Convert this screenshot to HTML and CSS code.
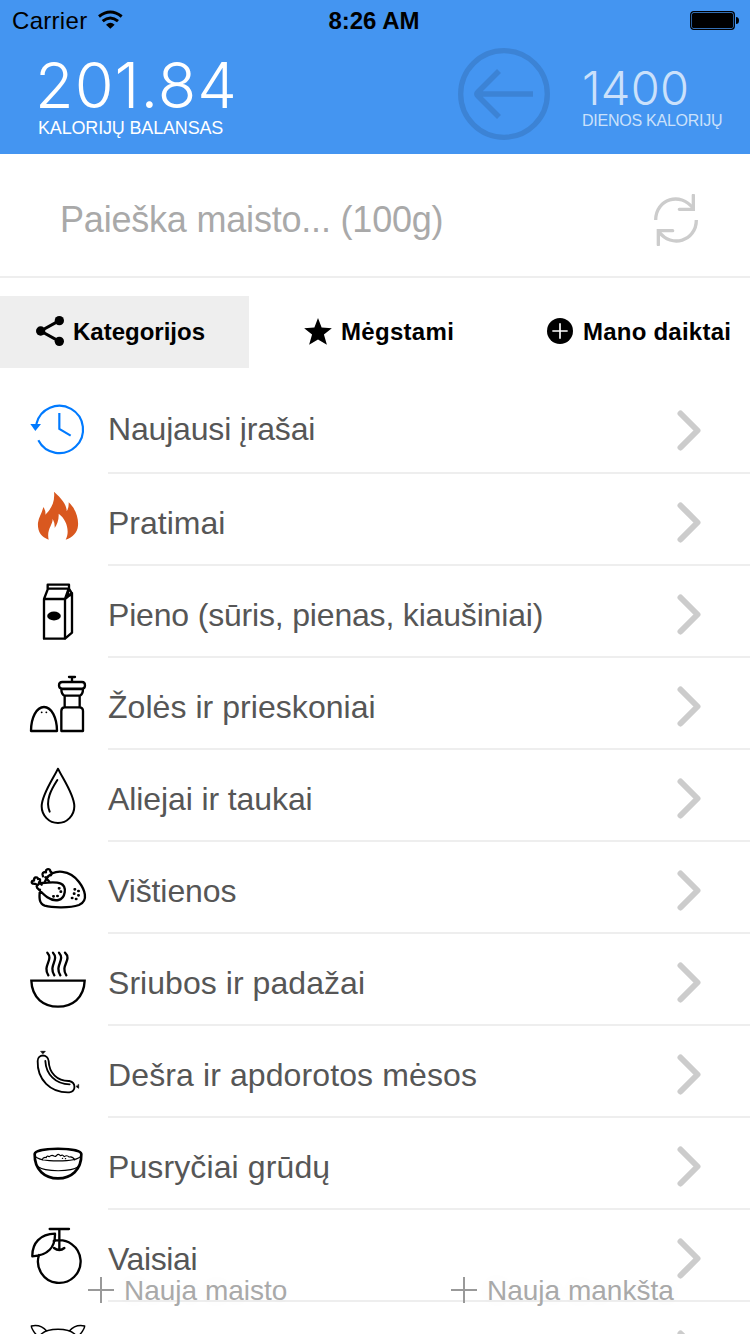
FILE: index.html
```html
<!DOCTYPE html>
<html lang="lt">
<head>
<meta charset="utf-8">
<title>Kalorijų balansas</title>
<link rel="stylesheet" href="styles.css">
</head>
<body>
<div class="screen">
  <header class="header">
    <div class="status">
      <div class="carrier"><span>Carrier</span>
        <svg class="wifi" viewBox="0 0 75 56"><g fill="none" stroke="#000" stroke-width="9"><path d="M3 19Q37-8 71 19"/><path d="M14 33Q37 14 60 33"/></g><path d="M24 44Q37 32 50 44L37 56Z"/></svg>
      </div>
      <div class="time">8:26 AM</div>
      <svg class="battery" viewBox="0 0 49 20"><rect x=".7" y=".7" width="43.6" height="17.6" rx="3" fill="none" stroke="#000" stroke-width="1.3"/><rect x="2" y="2" width="41" height="15" rx="1.5"/><path d="M46 6Q49 6 49 9.500Q49 13 46 13Z"/></svg>
    </div>
    <div class="summary">
      <div class="balance"><div class="balance-value">201.84</div><div class="balance-label">KALORIJŲ BALANSAS</div></div>
      <svg class="back" viewBox="0 0 92 92" fill="none" stroke="#3c83d5"><circle cx="46" cy="46" r="43.300" stroke-width="5.300"/><path d="M75 46H20M41 23L20 44Q18 46 20 48L41 69" stroke-width="5.600"/></svg>
      <div class="daily"><div class="daily-value">1400</div><div class="daily-label">DIENOS KALORIJŲ</div></div>
    </div>
  </header>
  <section class="search">
    <span class="placeholder">Paieška maisto... (100g)</span>
    <svg class="refresh" viewBox="0 0 132 156" fill="none" stroke="#ccc" stroke-width="10"><path d="M5 78C5 15 80-8 117 43M127 78C127 141 52 164 15 113"/><path d="M118 4V46H76M13 152V110H56" stroke-linecap="round"/></svg>
  </section>
  <nav class="tabs">
    <div class="tab tab-active"><svg class="share" viewBox="0 0 84 90"><path d="M70 14L14 45L70 76" fill="none" stroke="#000" stroke-width="9"/><circle cx="70" cy="14" r="14"/><circle cx="14" cy="45" r="14"/><circle cx="70" cy="76" r="14"/></svg><span class="t1">Kategorijos</span></div>
    <div class="tab"><svg class="star" viewBox="0 0 84 82"><path d="M42 0L53 29L84 31L60 50L69 81L42 65L15 81L24 50L0 31L31 29Z"/></svg><span class="t2">Mėgstami</span></div>
    <div class="tab"><svg class="add" viewBox="0 0 78 78"><circle cx="39" cy="39" r="39"/><path d="M16 39H62M39 16V62" stroke="#fff" stroke-width="5"/></svg><span class="t3">Mano daiktai</span></div>
  </nav>
  <main class="list">
    <div class="row row-first"><svg class="icon" viewBox="0 -24 264 270"><g fill="none" stroke="#007aff" stroke-width="6.500"><path d="M49 102A71 71 0 1 1 55 151"/><path d="M118 69V117L152 137"/></g><path d="M31 102H63L46 123Z" fill="#007aff"/></svg><div class="body"><span class="l1">Naujausi įrašai</span><svg class="chev" viewBox="0 0 24 42"><path d="M3.500 3.500L20.500 20.500L3.500 37.500"/></svg></div></div>
    <div class="row"><svg class="icon" viewBox="0 252 264 270"><path fill="#d9581f" d="M102 305C126 326 141 347 140 364Q147 353 146 337C167 356 176 384 174 407C172 427 159 441 137 449C150 425 141 389 116 371C117 389 111 404 104 414Q105 399 98 386C99 405 79 416 86 449C62 440 52 423 54 398C56 382 66 370 70 351Q78 363 76 374C90 360 106 339 102 305Z"/></svg><div class="body"><span class="l2">Pratimai</span><svg class="chev" viewBox="0 0 24 42"><path d="M3.500 3.500L20.500 20.500L3.500 37.500"/></svg></div></div>
    <div class="row"><svg class="icon line" viewBox="0 -12 264 270"><path d="M72 87H135V206H72ZM72 87L84 56H146L135 87M83 56V44H147V56M146 54L156 71V188L135 206M135 87L156 69M146 56Q141 74 149 77"/><ellipse cx="102" cy="138" rx="17" ry="10" fill="#000"/></svg><div class="body"><span class="l3">Pieno (sūris, pienas, kiaušiniai)</span><svg class="chev" viewBox="0 0 24 42"><path d="M3.500 3.500L20.500 20.500L3.500 37.500"/></svg></div></div>
    <div class="row"><svg class="icon line" viewBox="0 264 264 270"><path d="M33 483C33 444 49 411 72 411S111 444 111 483ZM124 483V423Q124 412 134 412H178Q189 412 189 423V483ZM134 410V378M179 410V378M133 377Q124 372 124 357H189Q189 372 180 377ZM127 336H186Q195 336 195 346T186 356H127Q117 356 117 346T127 336ZM156 335V322M147 321H165"/><path d="M65 427h.1M79 427h.1" stroke-width="5.500"/></svg><div class="body"><span class="l4">Žolės ir prieskoniai</span><svg class="chev" viewBox="0 0 24 42"><path d="M3.500 3.500L20.500 20.500L3.500 37.500"/></svg></div></div>
    <div class="row"><svg class="icon line" viewBox="0 -15 264 270"><path d="M114 41C101 69 65 119 65 154A49 50 0 0 0 163 154C163 119 127 69 114 41ZM112 75C94 103 75 136 89 170" stroke-width="6"/></svg><div class="body"><span class="l5">Aliejai ir taukai</span><svg class="chev" viewBox="0 0 24 42"><path d="M3.500 3.500L20.500 20.500L3.500 37.500"/></svg></div></div>
    <div class="row"><svg class="icon line" viewBox="0 261 264 270"><path d="M60 404C57 429 57 446 74 452C99 459 150 459 177 450C208 437 193 402 177 381C150 344 102 340 80 370L74 381M66 384C93 381 112 381 121 385C143 394 136 431 115 435C91 440 72 420 51 398M50 394L61 382M76 367L87 379M69 364C64 355 70 350 78 352C75 340 92 339 91 350C99 352 96 362 87 362L78 369M53 391C44 383 48 389 41 386C32 386 34 376 42 377C41 366 52 364 54 372C62 370 62 379 57 382L65 389"/><path d="M117 400h1M122 410h1M112 423h1M100 424h1M164 403h1M175 408h1M162 416h1M175 421h1M156 429h1M168 432h1" stroke-width="8"/></svg><div class="body"><span class="l6">Vištienos</span><svg class="chev" viewBox="0 0 24 42"><path d="M3.500 3.500L20.500 20.500L3.500 37.500"/></svg></div></div>
    <div class="row"><svg class="icon line" viewBox="0 -18 264 270"><path d="M34 122H194C192 175 156 200 114 200S36 175 34 122ZM82 38C102 60 66 76 85 106M99 38C119 60 84 76 103 106M117 38C137 60 102 76 121 106M135 38C158 60 119 76 139 106" stroke-linejoin="miter"/></svg><div class="body"><span class="l7">Sriubos ir padažai</span><svg class="chev" viewBox="0 0 24 42"><path d="M3.500 3.500L20.500 20.500L3.500 37.500"/></svg></div></div>
    <div class="row"><svg class="icon line" viewBox="0 258 264 270"><path d="M53 363C53 341 84 341 86 363C87 399 112 424 148 423C169 428 168 455 148 457C91 459 51 418 53 363ZM76 363C78 403 107 433 149 433" stroke-width="5.500"/><path d="M63 334L76 334L69 341ZM176 434V445L169 440Z" fill="#000" stroke-width="2"/></svg><div class="body"><span class="l8">Dešra ir apdorotos mėsos</span><svg class="chev" viewBox="0 0 24 42"><path d="M3.500 3.500L20.500 20.500L3.500 37.500"/></svg></div></div>
    <div class="row"><svg class="icon line" viewBox="0 -36 264 270"><path d="M44 72C48 51 180 51 184 72C185 120 153 145 114 145S43 120 44 72Z" stroke-width="8"/><path d="M46 79C60 97 168 97 182 79M50 108C78 127 151 127 179 108M66 90Q70 80 79 83Q79 76 88 80Q95 73 102 78Q107 81 110 76Q115 70 121 77Q130 73 132 80Q142 74 147 81Q159 78 164 90M127 85h1M136 86h1" stroke-width="3.500"/></svg><div class="body"><span class="l9">Pusryčiai grūdų</span><svg class="chev" viewBox="0 0 24 42"><path d="M3.500 3.500L20.500 20.500L3.500 37.500"/></svg></div></div>
    <div class="row"><svg class="icon line" viewBox="0 240 264 270"><path d="M57 375A64 64 0 1 0 101 333Q109 330 118 332M37 379C36 339 61 312 105 311C106 351 84 377 37 379ZM89 297H147M118 297V359M102 354Q110 360 118 360Q126 360 133 354"/></svg><div class="body"><span class="l10">Vaisiai</span><svg class="chev" viewBox="0 0 24 42"><path d="M3.500 3.500L20.500 20.500L3.500 37.500"/></svg></div></div>
    <div class="row"><svg class="icon line" viewBox="0 516 264 270"><path d="M54 620C44 609 35 600 34 588Q62 582 80 603M148 603Q166 582 194 588C193 600 184 609 174 620M64 612C85 593 143 593 164 612" stroke-width="4.500"/></svg><div class="body"><span></span><svg class="chev" viewBox="0 0 24 42"><path d="M3.500 3.500L20.500 20.500L3.500 37.500"/></svg></div></div>
  </main>
  <div class="actions">
    <div class="action"><svg class="plus" viewBox="0 0 26 26"><path d="M0 13H26M13 0V26"/></svg><span class="a1">Nauja maisto</span></div>
    <div class="action"><svg class="plus" viewBox="0 0 26 26"><path d="M0 13H26M13 0V26"/></svg><span class="a2">Nauja mankšta</span></div>
  </div>
</div>
</body>
</html>
```
FILE: styles.css
```css
* { box-sizing: border-box; }
body { margin: 0; background: #fff; font-family: "Liberation Sans", Arial, sans-serif; }
svg { display: block; flex: none; }
span, .time { white-space: nowrap; }
.screen { position: relative; width: 750px; height: 1334px; overflow: hidden; }
.header { height: 154px; background: #4495f1; }
.status { height: 40px; display: grid; grid-template-columns: 1fr auto 1fr; align-items: center; padding: 2px 11px 0 12px; font-size: 24px; }
.carrier { display: flex; align-items: center; gap: 11px; letter-spacing: .3px; }
.wifi { width: 25px; height: 19px; margin-top: -3px; }
.time { font-weight: bold; font-size: 24px; padding-right: 3px; }
.battery { width: 49px; height: 20px; justify-self: end; }
.summary { display: flex; color: #fff; padding-left: 38px; }
.balance { width: 420px; padding-top: 12px; }
.balance-value { font: 300 63px/66px Inter, sans-serif; letter-spacing: 1px; margin-left: -3px; }
.balance-label { font-size: 18px; line-height: 20px; letter-spacing: -.17px; }
.back { width: 92px; height: 92px; margin-top: 8px; }
.daily { padding: 24px 0 0 32px; color: #cbe1fb; }
.daily-value { font: 300 47px/47px Inter, sans-serif; letter-spacing: .3px; }
.daily-label { font-size: 16px; line-height: 20px; letter-spacing: -.25px; white-space: nowrap; }
.search { height: 124px; border-bottom: 2px solid #eee; display: flex; align-items: center; justify-content: space-between; padding: 10px 52px 0 60px; }
.placeholder { font-size: 36px; color: #a9a9a9; letter-spacing: -.2px; }
.refresh { width: 44px; height: 52px; }
.tabs { margin-top: 18px; height: 72px; display: grid; grid-template-columns: 249px 249px 252px; font-weight: bold; font-size: 24px; }
.tab { display: flex; align-items: center; justify-content: flex-start; }
.tab:nth-child(1) { padding-left: 36px; gap: 9px; }
.tab:nth-child(2) { padding-left: 55px; gap: 9px; }
.tab:nth-child(3) { padding-left: 49px; gap: 10px; }
.t2 { letter-spacing: .3px; }
.t3 { letter-spacing: .23px; }
.tab-active { background: #eee; }
.share { width: 28px; height: 30px; margin-top: -2px; }
.star { width: 28px; height: 27px; margin-top: -2px; }
.add { width: 26px; height: 26px; margin-top: -2px; }
.list { margin-top: 14px; }
.row { height: 92px; display: flex; padding-left: 20px; }
.icon { width: 88px; height: 90px; }
.line { fill: none; stroke: #000; stroke-width: 7; stroke-linejoin: round; stroke-linecap: round; }
.body { flex: 1; display: flex; align-items: center; justify-content: space-between; border-bottom: 2px solid #eee; color: #565656; font-size: 32px; padding: 7px 49px 0 0; }
.body span { padding-top: 2px; }
.row-first .body span { padding: 0 0 2px; }
.l1, .l3 { letter-spacing: -.18px; }
.l5, .l6 { letter-spacing: -.1px; }
.l4, .l7 { letter-spacing: .05px; }
.l8, .l9 { letter-spacing: .11px; }
.l10 { letter-spacing: -.4px; }
.chev { width: 24px; height: 42px; fill: none; stroke: #ccc; stroke-width: 6; stroke-linecap: round; stroke-linejoin: round; }
.actions { position: absolute; left: 88px; top: 1273px; display: flex; color: #a9a9a9; font-size: 28px; }
.action { display: flex; align-items: center; gap: 10px; height: 36px; width: 363px; text-shadow: 0 0 24px rgba(0,0,0,.06); }
.plus { width: 26px; height: 26px; stroke: #999; stroke-width: 2; margin-top: -3px; }
```
